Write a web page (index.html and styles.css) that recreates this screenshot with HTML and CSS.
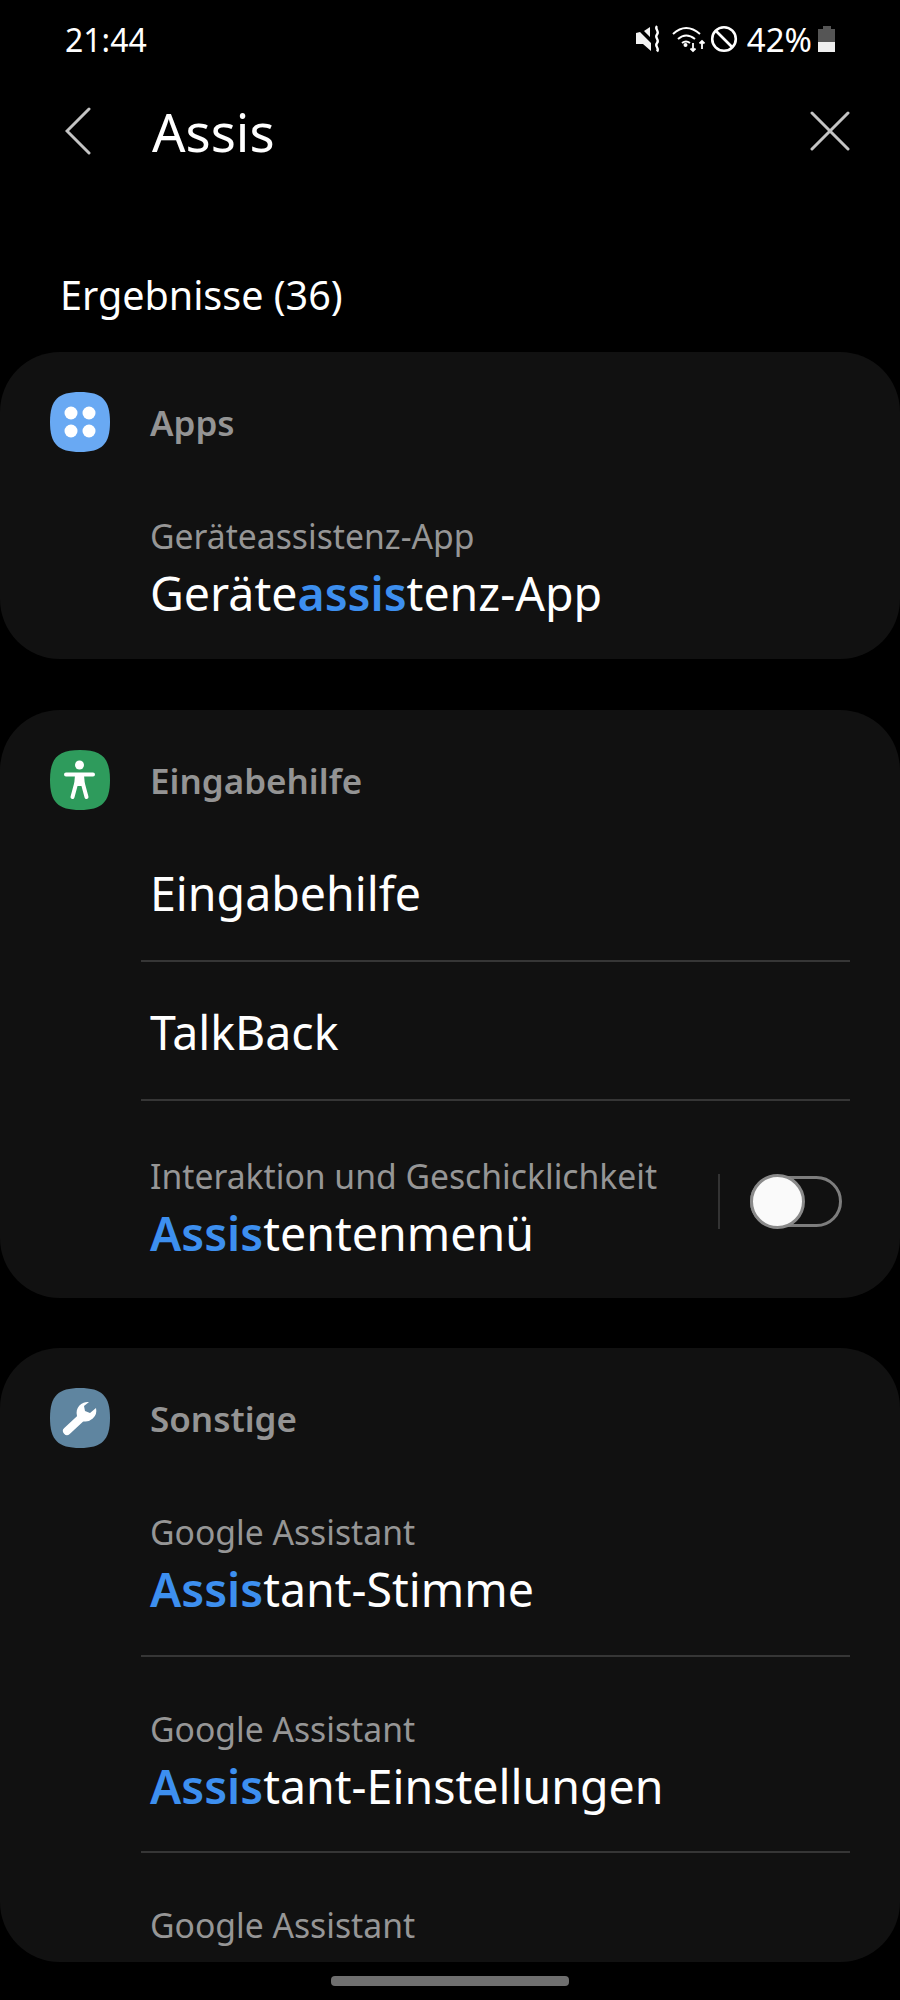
FILE: index.html
```html
<!DOCTYPE html>
<html lang="de">
<head>
    <meta charset="UTF-8">
    <title>Einstellungen suchen</title>
    <link rel="stylesheet" href="styles.css">
</head>
<body>
    <div class="phone">
        <div class="status-bar">
            <span class="clock">21:44</span>
            <div class="status-icons">
                <svg class="ic-mute" width="28" height="28" viewBox="0 0 28 28">
                    <path d="M1 8L5 7l11 11v8l-8 -7H1z M9 6l6 -4v10z" fill="#f2f2f2"/>
                    <path d="M22 1c-3 3 3 5 0 8.500s3 5 0 8.500 3 5 0 8.500" fill="none" stroke="#fff" stroke-width="2.400"/>
                </svg>
                <svg class="ic-wifi" width="34" height="28" viewBox="0 0 34 28">
                    <path d="M1 9Q14 -3 28 9M6 14Q14 7 23 14M10 18Q14 15 18 18" fill="none" stroke="#fff" stroke-width="2"/>
                    <circle cx="13.500" cy="20" r="2" fill="#fff"/>
                    <path d="M21 18v8M18.500 23.500l2.500 2.500 2.500 -2.500M30 24v-8M27.500 18.500l2.500 -2.500 2.500 2.500" fill="none" stroke="#fff" stroke-width="1.800"/>
                </svg>
                <svg class="ic-block" width="28" height="28" viewBox="0 0 28 28">
                    <circle cx="14" cy="14" r="11.800" fill="none" stroke="#fff" stroke-width="2.600"/>
                    <path d="M6 6l16 16" stroke="#fff" stroke-width="2.600"/>
                </svg>
                <span class="battery-text">42%</span>
                <div class="battery">
                    <div class="battery-cap"></div>
                    <div class="battery-empty"></div>
                    <div class="battery-full"></div>
                </div>
            </div>
        </div>

        <div class="search-bar">
            <svg class="back" width="26" height="48" viewBox="0 0 26 48">
                <path d="M24 2L2 24l22 22" fill="none" stroke="#c4c4c4" stroke-width="3" stroke-linecap="round"/>
            </svg>
            <span class="query">Assis</span>
            <svg class="close" width="40" height="40" viewBox="0 0 40 40">
                <path d="M2 2l36 36M38 2L2 38" fill="none" stroke="#c4c4c4" stroke-width="3" stroke-linecap="round"/>
            </svg>
        </div>

        <h2 class="results">Ergebnisse (36)</h2>

        <section class="card">
            <div class="card-head">
                <svg class="app-icon" width="60" height="60" viewBox="0 0 60 60">
                    <path d="M30 0C52 0 60 8 60 30S52 60 30 60 0 52 0 30 8 0 30 0z" fill="#69a9f3"/>
                    <circle cx="21" cy="21" r="6.500" fill="#fff"/>
                    <circle cx="39" cy="21" r="6.500" fill="#fff"/>
                    <circle cx="21" cy="39" r="6.500" fill="#fff"/>
                    <circle cx="39" cy="39" r="6.500" fill="#fff"/>
                </svg>
                <span class="card-label">Apps</span>
            </div>
            <div class="rows">
                <div class="row tall">
                    <div class="row-text">
                        <div class="row-sub">Geräteassistenz-App</div>
                        <div class="row-title">Geräte<span class="hit">assis</span>tenz-App</div>
                    </div>
                </div>
            </div>
        </section>

        <section class="card">
            <div class="card-head">
                <svg class="app-icon" width="60" height="60" viewBox="0 0 60 60">
                    <path d="M30 0C52 0 60 8 60 30S52 60 30 60 0 52 0 30 8 0 30 0z" fill="#2e9b5c"/>
                    <circle cx="29.500" cy="15" r="4.500" fill="#fff"/>
                    <path d="M16 24.500h27M26 34l-3.500 13M33 34l3.500 13" fill="none" stroke="#fff" stroke-width="4" stroke-linecap="round"/>
                    <path d="M25 25h9l1 11h-11z" fill="#fff"/>
                </svg>
                <span class="card-label">Eingabehilfe</span>
            </div>
            <div class="rows">
                <div class="row">
                    <div class="row-title">Eingabehilfe</div>
                </div>
                <div class="row">
                    <div class="row-title">TalkBack</div>
                </div>
                <div class="row tall row-switch">
                    <div class="row-text">
                        <div class="row-sub">Interaktion und Geschicklichkeit</div>
                        <div class="row-title"><span class="hit">Assis</span>tentenmenü</div>
                    </div>
                    <div class="switch-wrap">
                        <div class="switch">
                            <div class="thumb"></div>
                        </div>
                    </div>
                </div>
            </div>
        </section>

        <section class="card card-cut">
            <div class="card-head">
                <svg class="app-icon" width="60" height="60" viewBox="0 0 60 60">
                    <path d="M30 0C52 0 60 8 60 30S52 60 30 60 0 52 0 30 8 0 30 0z" fill="#5f85a0"/>
                    <path d="M17 43l14 -13" stroke="#fff" stroke-width="8" stroke-linecap="round"/>
                    <path d="M39 14a11 11 0 0 0 -12 14l5 5a11 11 0 0 0 14 -13l-6 5 -5 -2 -1 -5z" fill="#fff"/>
                </svg>
                <span class="card-label">Sonstige</span>
            </div>
            <div class="rows">
                <div class="row tall">
                    <div class="row-text">
                        <div class="row-sub">Google Assistant</div>
                        <div class="row-title"><span class="hit">Assis</span>tant-Stimme</div>
                    </div>
                </div>
                <div class="row tall">
                    <div class="row-text">
                        <div class="row-sub">Google Assistant</div>
                        <div class="row-title"><span class="hit">Assis</span>tant-Einstellungen</div>
                    </div>
                </div>
                <div class="row tall">
                    <div class="row-text">
                        <div class="row-sub">Google Assistant</div>
                        <div class="row-title"><span class="hit">Assis</span>tant-Hilfe</div>
                    </div>
                </div>
            </div>
        </section>

        <div class="home-bar"></div>
    </div>
</body>
</html>
```

FILE: styles.css
```css
html, body {
    margin: 0;
    padding: 0;
    background: #000;
}

.phone {
    width: 900px;
    height: 2000px;
    overflow: hidden;
    font-family: 'Noto Sans', sans-serif;
    color: #fff;
    background: #000;
}

.status-bar {
    display: flex;
    justify-content: space-between;
    align-items: center;
    height: 38px;
    padding: 20px 65px 0 65px;
}

.clock {
    font-size: 32px;
}

.status-icons {
    display: flex;
    align-items: center;
}

.ic-wifi {
    margin-left: 9px;
}

.ic-block {
    margin-left: 4px;
}

.battery-text {
    font-size: 33px;
    margin-left: 9px;
}

.battery {
    width: 17px;
    height: 26px;
    margin-left: 6px;
    display: flex;
    flex-direction: column;
    align-items: center;
}

.battery-cap {
    width: 8px;
    height: 3px;
    background: #555;
}

.battery-empty {
    width: 100%;
    height: 13px;
    background: #555;
}

.battery-full {
    width: 100%;
    height: 10px;
    background: #eee;
}

.search-bar {
    display: flex;
    align-items: center;
    height: 76px;
    margin-top: 35px;
    padding: 0 50px 0 65px;
}

.query {
    font-size: 52.500px;
    margin-left: 61px;
    flex: 1;
}

.results {
    margin: 101px 0 0 60px;
    font-size: 39.500px;
    font-weight: 400;
    line-height: 50px;
}

.card {
    margin-top: 51px;
    background: #111;
    border-radius: 60px;
    padding-top: 40px;
}

.results + .card {
    margin-top: 32px;
}

.card-cut {
    margin-top: 50px;
    height: 574px;
    overflow: hidden;
}

.card-head {
    display: flex;
    align-items: center;
    padding-left: 50px;
    margin-bottom: 12px;
}

.card-label {
    margin-left: 40px;
    font-size: 35px;
    font-weight: 600;
    color: #949494;
}

.rows {
    margin: 0 50px 0 141px;
}

.row {
    display: flex;
    align-items: center;
    height: 134px;
    padding: 3px 0 0 9px;
    border-top: 2px solid #363636;
}

.row:first-child {
    height: 135px;
    border-top: none;
}

.row.tall {
    height: 194px;
    padding-top: 0;
}

.row.tall:first-child {
    height: 195px;
}

.row.row-switch {
    padding-top: 3px;
}

.row-text {
    flex: 1;
    padding-top: 19px;
}

.row-sub {
    font-size: 33.700px;
    line-height: 44px;
    color: #969696;
}

.row-title {
    font-size: 46.500px;
    line-height: 70px;
}

.hit {
    color: #3d8fef;
    font-weight: 600;
}

.switch-wrap {
    display: flex;
    align-items: center;
    height: 55px;
    padding-left: 30px;
    margin-right: 8px;
    border-left: 2px solid #333;
}

.switch {
    position: relative;
    width: 92px;
    height: 51px;
    box-sizing: border-box;
    border: 3px solid #7d7d7d;
    border-radius: 26px;
}

.thumb {
    position: absolute;
    left: -3px;
    top: -5px;
    width: 55px;
    height: 55px;
    box-sizing: border-box;
    background: #fafafa;
    border: 3px solid #8a8a8a;
    border-radius: 50%;
}

.home-bar {
    width: 238px;
    height: 10px;
    margin: 14px auto 0;
    background: #6f6f6f;
    border-radius: 4px;
}
```
